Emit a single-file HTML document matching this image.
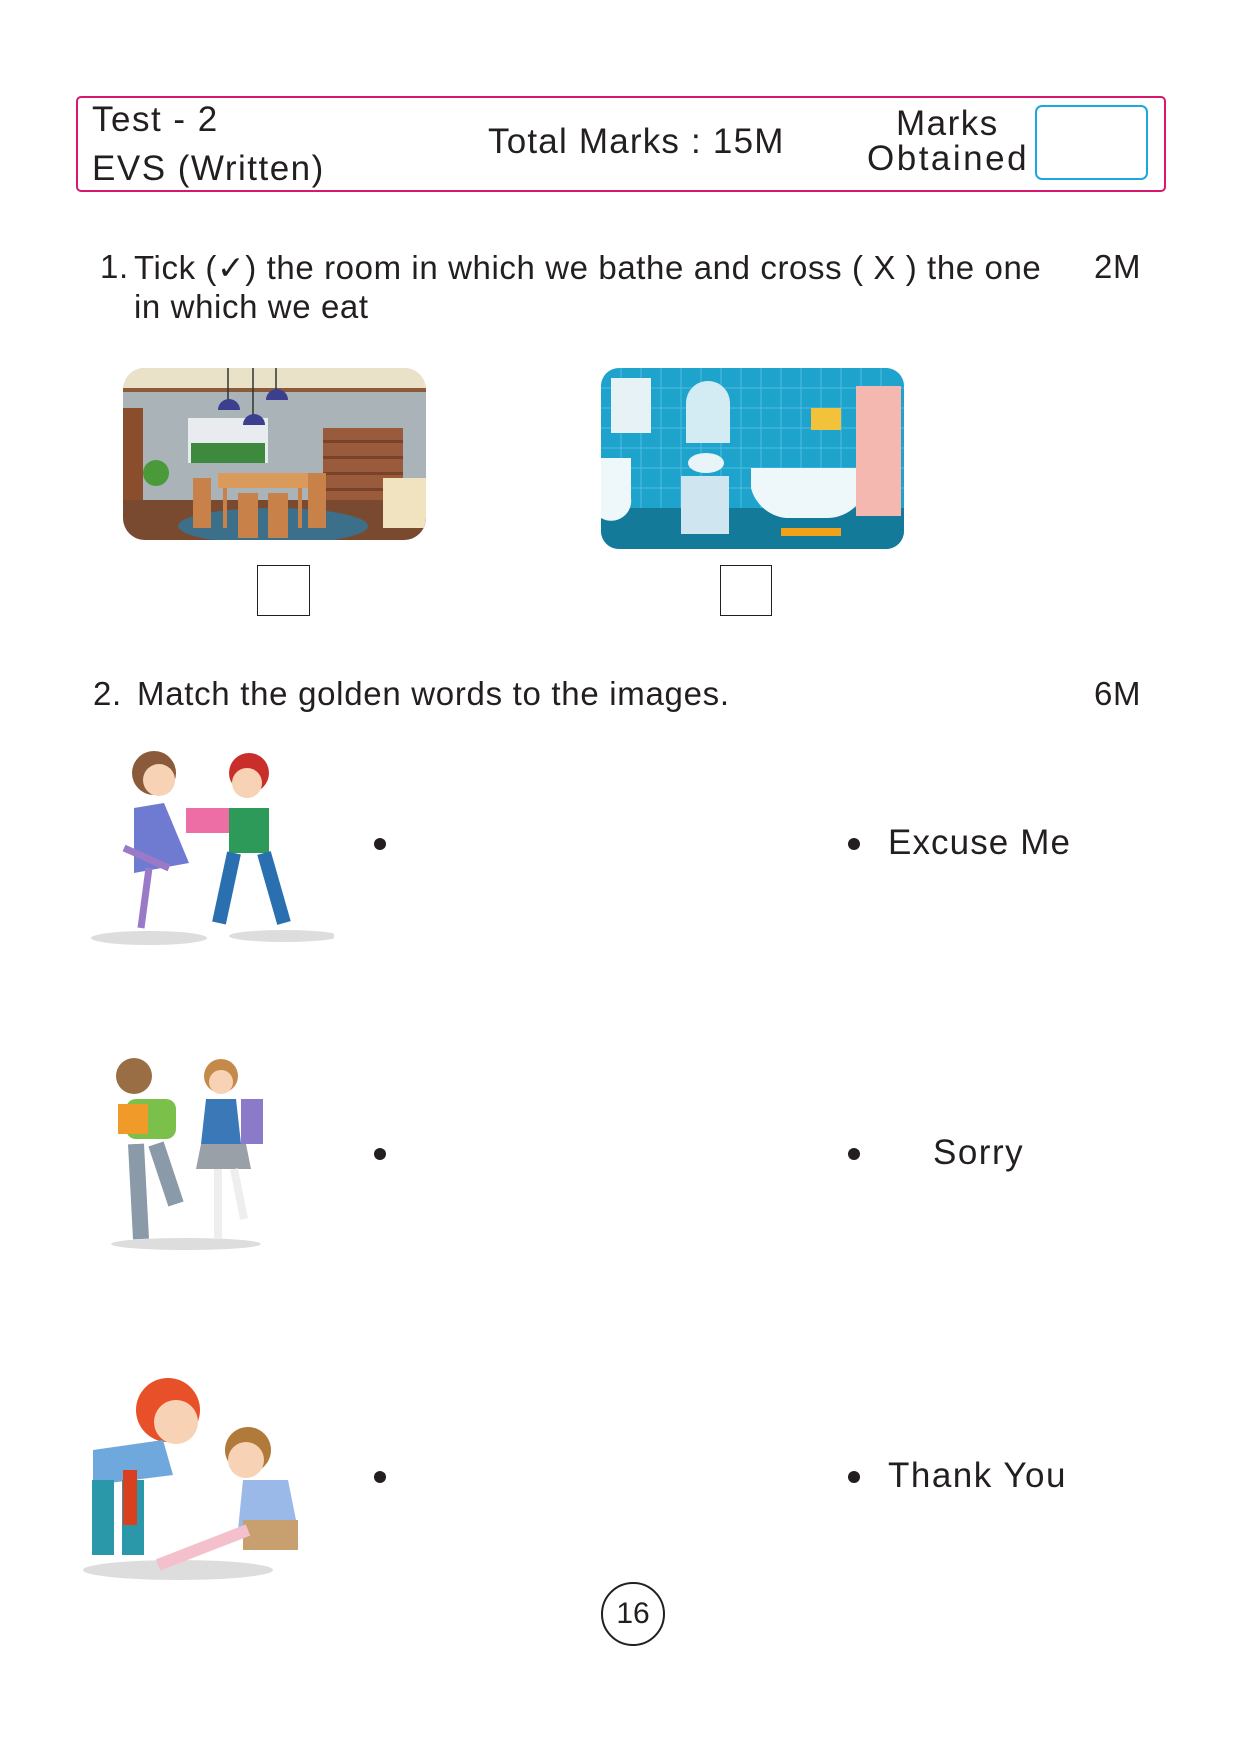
<!DOCTYPE html>
<html><head><meta charset="utf-8"><style>
*{margin:0;padding:0;box-sizing:border-box}
body{width:1241px;height:1755px;background:#fff;position:relative;font-family:"Liberation Sans",sans-serif;color:#231f20;overflow:hidden}
.a{position:absolute;white-space:nowrap}
.t{font-size:33px;letter-spacing:0.7px}
.dot{position:absolute;width:12px;height:12px;border-radius:50%;background:#231f20}
</style></head><body>
<div class="a" style="left:76px;top:96px;width:1090px;height:96px;border:2.5px solid #d6196f;border-radius:5px"></div>
<div class="a" style="left:1035px;top:105px;width:113px;height:75px;border:2.5px solid #1ba8e0;border-radius:7px"></div>
<div class="a t" style="left:92px;top:100px;font-size:35px;letter-spacing:1.5px">Test - 2</div>
<div class="a t" style="left:92px;top:149px;font-size:35px;letter-spacing:1.5px">EVS (Written)</div>
<div class="a t" style="left:488px;top:122px;font-size:35px;letter-spacing:1.2px">Total Marks : 15M</div>
<div class="a t" style="left:896px;top:104px;font-size:35px;letter-spacing:1.5px">Marks</div>
<div class="a t" style="left:867px;top:139px;font-size:35px;letter-spacing:2.5px">Obtained</div>

<div class="a t" style="left:100px;top:248px">1.</div>
<div class="a t" style="left:134px;top:248px;letter-spacing:0.6px">Tick (✓) the room in which we bathe and cross ( X ) the one</div>
<div class="a t" style="left:1094px;top:248px">2M</div>
<div class="a t" style="left:134px;top:288px;letter-spacing:0.6px">in which we eat</div>

<svg class="a" style="left:123px;top:368px" width="303" height="172" viewBox="0 0 303 172">
<defs><clipPath id="c1"><rect width="303" height="172" rx="22"/></clipPath></defs>
<g clip-path="url(#c1)">
<rect width="303" height="172" fill="#a9b3b8"/>
<rect width="303" height="20" fill="#e9e1c8"/>
<rect y="20" width="303" height="4" fill="#8a5a3a"/>
<rect x="200" y="60" width="80" height="80" fill="#9a5a3c"/>
<g fill="#7a4228"><rect x="200" y="72" width="80" height="3"/><rect x="200" y="88" width="80" height="3"/><rect x="200" y="104" width="80" height="3"/><rect x="200" y="120" width="80" height="3"/></g>
<rect x="65" y="50" width="80" height="45" fill="#e8ecee"/>
<rect x="68" y="75" width="74" height="20" fill="#3d8a3f"/>
<rect x="0" y="40" width="20" height="100" fill="#8a4e2c"/>
<rect y="132" width="303" height="40" fill="#7a4a30"/>
<ellipse cx="150" cy="158" rx="95" ry="18" fill="#3b6f8a"/>
<rect x="95" y="105" width="90" height="15" fill="#d99a5c"/>
<g fill="#c9814a"><rect x="100" y="120" width="4" height="40"/><rect x="175" y="120" width="4" height="40"/><rect x="70" y="110" width="18" height="50"/><rect x="185" y="105" width="18" height="55"/><rect x="115" y="125" width="20" height="45"/><rect x="145" y="125" width="20" height="45"/></g>
<path d="M105 0V35M130 0V50M153 0V25" stroke="#333" stroke-width="1.5"/>
<g fill="#3b3f8e"><path d="M95 42a11 11 0 0 1 22 0z"/><path d="M120 57a11 11 0 0 1 22 0z"/><path d="M143 32a11 11 0 0 1 22 0z"/></g>
<circle cx="33" cy="105" r="13" fill="#4a9a3a"/>
<rect x="260" y="110" width="43" height="50" fill="#f1e3c0"/>
</g></svg>

<svg class="a" style="left:601px;top:368px" width="303" height="181" viewBox="0 0 303 181">
<defs><clipPath id="c2"><rect width="303" height="181" rx="18"/></clipPath></defs>
<g clip-path="url(#c2)">
<rect width="303" height="181" fill="#1ea3cc"/>
<g stroke="#4fbde0" stroke-width="1"><path d="M0 20H303M0 40H303M0 60H303M0 80H303M0 100H303M0 120H303M20 0V140M40 0V140M60 0V140M80 0V140M100 0V140M120 0V140M140 0V140M160 0V140M180 0V140M200 0V140M220 0V140M240 0V140M260 0V140M280 0V140"/></g>
<rect y="140" width="303" height="41" fill="#137a9a"/>
<rect x="10" y="10" width="40" height="55" fill="#e6f2f6"/>
<path d="M85 75V35a22 22 0 0 1 44 0V75z" fill="#d3ecf3"/>
<rect x="80" y="108" width="48" height="58" fill="#cfe6f0"/>
<ellipse cx="105" cy="95" rx="18" ry="10" fill="#e8f4f8"/>
<path d="M150 100h115v20a40 40 0 0 1-40 30h-40a40 40 0 0 1-35-30z" fill="#eef7fa"/>
<rect x="255" y="18" width="45" height="130" fill="#f4b8b0"/>
<path d="M0 90h30v40a20 20 0 0 1-30 20z" fill="#eef7fa"/>
<rect x="180" y="160" width="60" height="8" fill="#f2a21a"/>
<rect x="210" y="40" width="30" height="22" fill="#f2c23a"/>
</g></svg>

<div class="a" style="left:257px;top:565px;width:53px;height:51px;border:1.5px solid #231f20"></div>
<div class="a" style="left:720px;top:565px;width:52px;height:51px;border:1.5px solid #231f20"></div>

<div class="a t" style="left:93px;top:675px">2.</div>
<div class="a t" style="left:137px;top:675px">Match the golden words to the images.</div>
<div class="a t" style="left:1094px;top:675px">6M</div>

<svg class="a" style="left:89px;top:738px" width="245" height="212" viewBox="0 0 245 212">
<ellipse cx="60" cy="200" rx="58" ry="7" fill="#ddd"/><ellipse cx="195" cy="198" rx="55" ry="6" fill="#ddd"/>
<circle cx="65" cy="35" r="22" fill="#8a5a3a"/><circle cx="70" cy="42" r="16" fill="#f7d2b5"/>
<path d="M45 70l30-5 25 60-55 10z" fill="#6f7bd0"/>
<path d="M60 130l-8 60M80 130l-45 -20" stroke="#9a7ac8" stroke-width="7"/>
<circle cx="160" cy="35" r="20" fill="#c92e2a"/><circle cx="158" cy="45" r="15" fill="#f7d2b5"/>
<rect x="97" y="70" width="48" height="25" fill="#ec6ea4"/>
<path d="M140 70h40v45h-40z" fill="#2e9a5a"/>
<path d="M145 115l-15 70M175 115l20 70" stroke="#2a6fb0" stroke-width="14"/>
</svg>
<svg class="a" style="left:106px;top:1054px" width="170" height="198" viewBox="0 0 170 198">
<ellipse cx="80" cy="190" rx="75" ry="6" fill="#ddd"/>
<circle cx="28" cy="22" r="18" fill="#9a6e45"/>
<rect x="20" y="45" width="50" height="40" rx="10" fill="#7bc04a"/><rect x="12" y="50" width="30" height="30" fill="#f09a2a"/>
<path d="M30 90l5 95M50 90l20 60" stroke="#8a9aa8" stroke-width="16"/>
<circle cx="115" cy="22" r="17" fill="#c48a4a"/><circle cx="115" cy="28" r="12" fill="#f7d2b5"/>
<path d="M100 45h30l5 45h-40z" fill="#3a78b8"/><path d="M95 90h45l5 25h-55z" fill="#9aa0a8"/>
<path d="M112 115v70M128 115l10 50" stroke="#eee" stroke-width="8"/>
<rect x="135" y="45" width="22" height="45" fill="#8a7ac8"/>
</svg>
<svg class="a" style="left:78px;top:1370px" width="241" height="212" viewBox="0 0 241 212">
<ellipse cx="100" cy="200" rx="95" ry="10" fill="#ddd"/>
<circle cx="90" cy="40" r="32" fill="#e8502a"/><circle cx="98" cy="52" r="22" fill="#f7d2b5"/>
<path d="M15 80l70-10 10 35-80 10z" fill="#6fa8dc"/>
<path d="M25 110v75M55 110v75" stroke="#2a98a8" stroke-width="22"/>
<rect x="45" y="100" width="14" height="55" fill="#d8401e"/>
<circle cx="170" cy="80" r="23" fill="#b07a3a"/><circle cx="168" cy="90" r="18" fill="#f7d2b5"/>
<path d="M165 110h45l10 50h-60z" fill="#9ab8e8"/><rect x="165" y="150" width="55" height="30" fill="#c8a070"/>
<path d="M170 160l-90 35" stroke="#f4c0cc" stroke-width="12"/>
</svg>

<div class="dot" style="left:374px;top:838px"></div>
<div class="dot" style="left:848px;top:838px"></div>
<div class="a t" style="left:888px;top:823px;font-size:35px;letter-spacing:1.1px">Excuse Me</div>
<div class="dot" style="left:374px;top:1148px"></div>
<div class="dot" style="left:848px;top:1148px"></div>
<div class="a t" style="left:933px;top:1133px;font-size:35px;letter-spacing:1.5px">Sorry</div>
<div class="dot" style="left:374px;top:1471px"></div>
<div class="dot" style="left:848px;top:1471px"></div>
<div class="a t" style="left:888px;top:1456px;font-size:35px;letter-spacing:1.5px">Thank You</div>

<div class="a" style="left:601px;top:1582px;width:64px;height:64px;border:2px solid #231f20;border-radius:50%;text-align:center;line-height:60px;font-size:30px">16</div>
</body></html>
